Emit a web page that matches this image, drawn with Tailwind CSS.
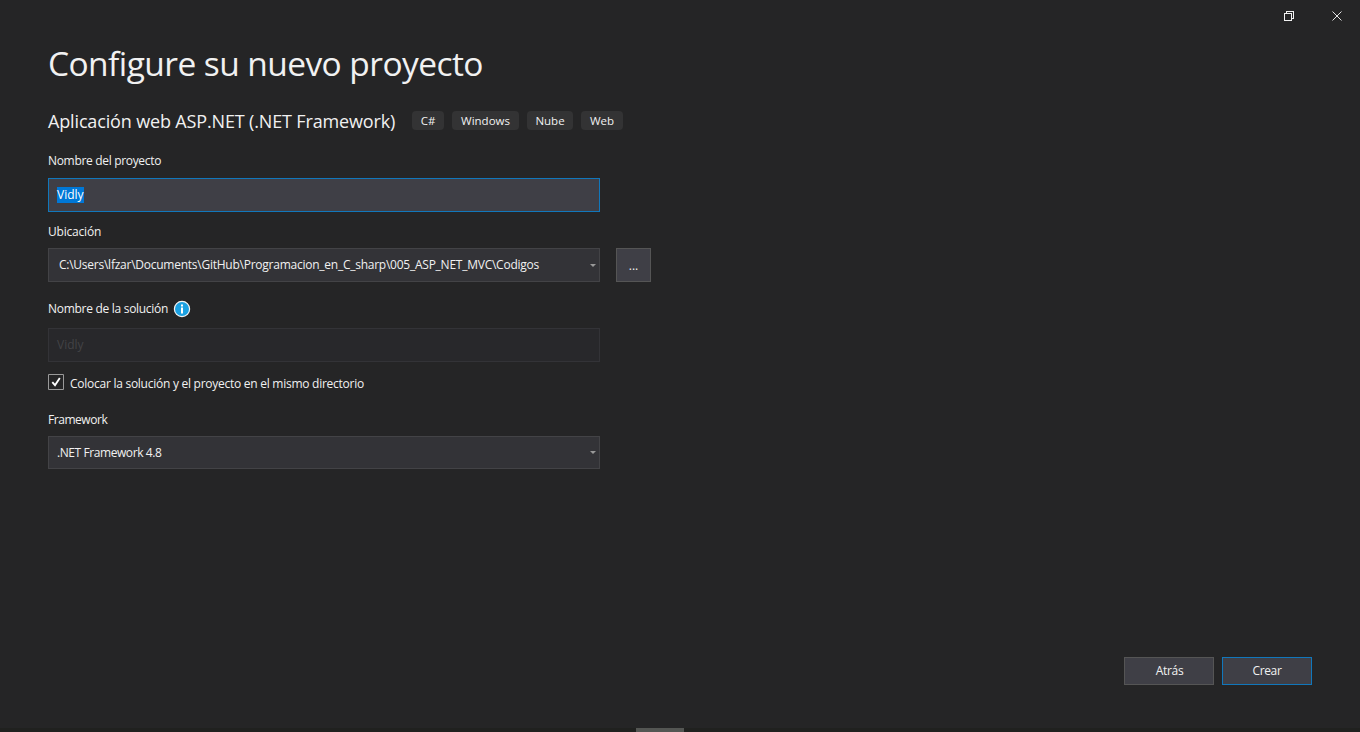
<!DOCTYPE html>
<html lang="es">
<head>
<meta charset="utf-8">
<title>Configure su nuevo proyecto</title>
<script src="https://cdn.jsdelivr.net/npm/@tailwindcss/browser@4"></script>
</head>
<body class="bg-[#252526]">
<div class="flex h-[732px] w-[1360px] flex-col overflow-hidden bg-[#252526] font-['Open_Sans','Noto_Sans',sans-serif] text-[12px] leading-4 whitespace-nowrap text-[#f1f1f1]">
  <header class="flex h-8 shrink-0 justify-end">
    <button class="flex w-12 items-center justify-center" aria-label="Restaurar">
      <svg class="h-3 w-3" viewBox="0 0 12 12" fill="none" stroke="#f1f1f1" shape-rendering="crispEdges"><path d="M1.5 3.5h7v7h-7zM3.5 3.5v-2h7v7h-2"/></svg>
    </button>
    <button class="flex w-[47px] items-center justify-center pl-[1px]" aria-label="Cerrar">
      <svg class="h-3 w-3" viewBox="0 0 12 12" fill="none" stroke="#e2e2e2"><path d="M1.5 1.5l9 9M10.5 1.5l-9 9"/></svg>
    </button>
  </header>
  <main class="flex grow flex-col px-12">
    <h1 class="mt-[7px] h-12 text-[33.5px] leading-[48px] tracking-[-0.57px]">Configure su nuevo proyecto</h1>
    <div class="mt-[21px] flex h-[26px] items-center">
      <h2 class="w-[364px] text-[18px] leading-[26px] tracking-[-0.15px]">Aplicación web ASP.NET (.NET Framework)</h2>
      <ul class="-mt-[1px] flex gap-2 text-[11.5px] leading-[19px]">
        <li class="w-8 rounded bg-[#333334] text-center">C#</li>
        <li class="w-[67px] rounded bg-[#333334] text-center">Windows</li>
        <li class="w-[46px] rounded bg-[#333334] text-center">Nube</li>
        <li class="w-[42px] rounded bg-[#333334] text-center">Web</li>
      </ul>
    </div>
    <label class="mt-[19px] tracking-[-0.32px]">Nombre del proyecto</label>
    <div class="mt-[9px] flex h-[34px] w-[552px] items-center border border-[#1177bb] bg-[#3f3f46] pl-2"><span class="bg-[#0078d7] text-white">Vidly</span></div>
    <label class="mt-[12px] tracking-[-0.2px]">Ubicación</label>
    <div class="mt-[8px] flex gap-4">
      <div class="flex h-[34px] w-[552px] items-center justify-between border border-[#434346] bg-[#333337] pr-[3px] pl-[10px]">
        <span class="tracking-[-0.248px]">C:\Users\lfzar\Documents\GitHub\Programacion_en_C_sharp\005_ASP_NET_MVC\Codigos</span>
        <svg class="h-[3px] w-[6px]" viewBox="0 0 6 3" fill="#999999"><path d="M0 0h6L3 3z"/></svg>
      </div>
      <button class="flex h-[34px] w-[35px] items-center justify-center border border-[#555555] bg-[#3f3f46] pt-[2px]">...</button>
    </div>
    <div class="mt-[18px] flex h-[18px] items-center">
      <label class="w-[125px] tracking-[-0.29px]">Nombre de la solución</label>
      <svg class="h-[18px] w-[18px]" viewBox="0 0 18 18"><circle cx="9" cy="9" r="7.6" fill="#1ba1e2" stroke="#f5f5f5" stroke-width="1.2"/><path d="M8 4.5h2v2H8zM8 7.5h2v6H8z" fill="#fff"/></svg>
    </div>
    <div class="mt-[10px] flex h-[34px] w-[552px] items-center border border-[#333337] bg-[#28282b] pl-2 text-[#434346]">Vidly</div>
    <div class="mt-[12px] flex h-[18px] gap-[6px]">
      <svg class="h-4 w-4" viewBox="0 0 16 16"><path d="M.5.5h15v15H.5z" fill="#252526" stroke="#999999"/><path d="M4.3 8.2l2.7 3L11.8 4" fill="none" stroke="#fff" stroke-width="1.9"/></svg>
      <label class="pt-[2px] tracking-[-0.26px]">Colocar la solución y el proyecto en el mismo directorio</label>
    </div>
    <label class="mt-[20px] tracking-[-0.45px]">Framework</label>
    <div class="mt-[8px] flex h-[33px] w-[552px] items-center justify-between border border-[#434346] bg-[#333337] pr-[3px] pl-2">
      <span class="tracking-[-0.42px]">.NET Framework 4.8</span>
      <svg class="h-[3px] w-[6px]" viewBox="0 0 6 3" fill="#999999"><path d="M0 0h6L3 3z"/></svg>
    </div>
    <div class="mt-auto mb-[43px] flex justify-end gap-2">
      <button class="h-7 w-[90px] border border-[#555555] bg-[#3f3f46] pl-[1px] tracking-[-0.3px]">Atrás</button>
      <button class="h-7 w-[90px] border border-[#1177bb] bg-[#3f3f46] tracking-[-0.4px]">Crear</button>
    </div>
  </main>
  <footer class="flex h-1 shrink-0 justify-center bg-[#20211f]"><div class="mr-[40px] h-1 w-12 bg-[#545653]"></div></footer>
</div>
</body>
</html>
